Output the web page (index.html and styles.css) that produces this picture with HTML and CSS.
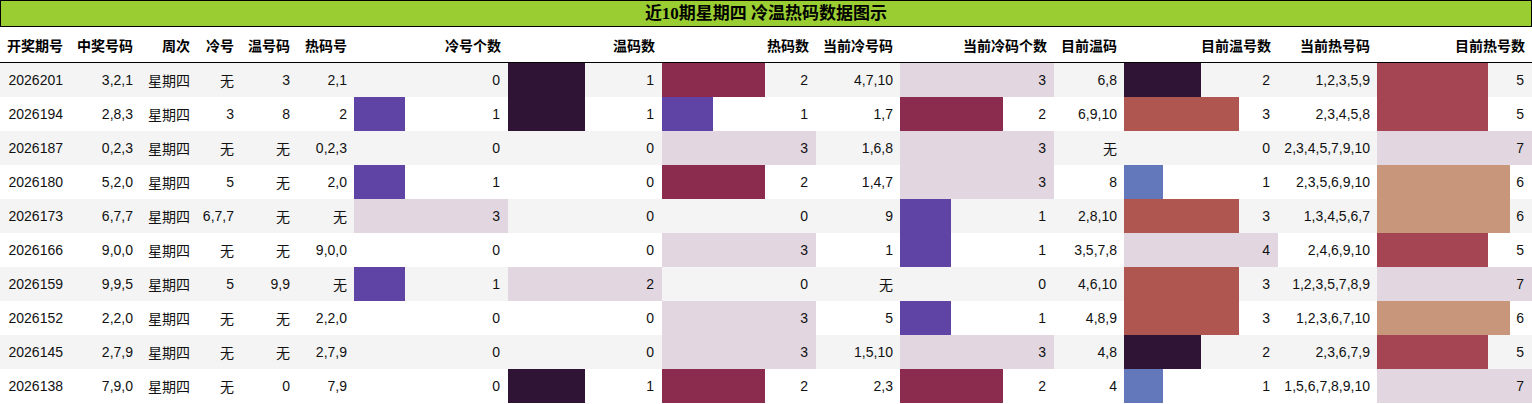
FILE: index.html
```html
<!DOCTYPE html>
<html lang="zh">
<head>
<meta charset="utf-8">
<title>近10期星期四 冷温热码数据图示</title>
<link rel="stylesheet" href="styles.css">
</head>
<body>
<div class="title">近10期星期四 冷温热码数据图示</div>
<table class="data">
  <colgroup>
    <col class="w70"><col class="w70"><col class="w57"><col class="w44"><col class="w56"><col class="w57">
    <col class="w154"><col class="w154"><col class="w154"><col class="w84"><col class="w154">
    <col class="w70"><col class="w154"><col class="w99"><col class="w155">
  </colgroup>
  <thead>
    <tr>
      <th>开奖期号</th><th>中奖号码</th><th>周次</th><th>冷号</th><th>温号码</th><th>热码号</th>
      <th>冷号个数</th><th>温码数</th><th>热码数</th><th>当前冷号码</th><th>当前冷码个数</th>
      <th>目前温码</th><th>目前温号数</th><th>当前热号码</th><th>目前热号数</th>
    </tr>
  </thead>
  <tbody>
    <tr>
      <td>2026201</td><td>3,2,1</td><td>星期四</td><td>无</td><td>3</td><td>2,1</td>
      <td class="bar">0</td>
      <td class="bar c-dark" style="--w:50%">1</td>
      <td class="bar c-maroon" style="--w:66.67%">2</td>
      <td>4,7,10</td>
      <td class="bar c-light" style="--w:100%">3</td>
      <td>6,8</td>
      <td class="bar c-dark" style="--w:50%">2</td>
      <td>1,2,3,5,9</td>
      <td class="bar c-rose" style="--w:71.43%">5</td>
    </tr>
    <tr>
      <td>2026194</td><td>2,8,3</td><td>星期四</td><td>3</td><td>8</td><td>2</td>
      <td class="bar c-purple" style="--w:33.33%">1</td>
      <td class="bar c-dark" style="--w:50%">1</td>
      <td class="bar c-purple" style="--w:33.33%">1</td>
      <td>1,7</td>
      <td class="bar c-maroon" style="--w:66.67%">2</td>
      <td>6,9,10</td>
      <td class="bar c-red" style="--w:75%">3</td>
      <td>2,3,4,5,8</td>
      <td class="bar c-rose" style="--w:71.43%">5</td>
    </tr>
    <tr>
      <td>2026187</td><td>0,2,3</td><td>星期四</td><td>无</td><td>无</td><td>0,2,3</td>
      <td class="bar">0</td>
      <td class="bar">0</td>
      <td class="bar c-light" style="--w:100%">3</td>
      <td>1,6,8</td>
      <td class="bar c-light" style="--w:100%">3</td>
      <td>无</td>
      <td class="bar">0</td>
      <td>2,3,4,5,7,9,10</td>
      <td class="bar c-light" style="--w:100%">7</td>
    </tr>
    <tr>
      <td>2026180</td><td>5,2,0</td><td>星期四</td><td>5</td><td>无</td><td>2,0</td>
      <td class="bar c-purple" style="--w:33.33%">1</td>
      <td class="bar">0</td>
      <td class="bar c-maroon" style="--w:66.67%">2</td>
      <td>1,4,7</td>
      <td class="bar c-light" style="--w:100%">3</td>
      <td>8</td>
      <td class="bar c-blue" style="--w:25%">1</td>
      <td>2,3,5,6,9,10</td>
      <td class="bar c-tan" style="--w:85.71%">6</td>
    </tr>
    <tr>
      <td>2026173</td><td>6,7,7</td><td>星期四</td><td>6,7,7</td><td>无</td><td>无</td>
      <td class="bar c-light" style="--w:100%">3</td>
      <td class="bar">0</td>
      <td class="bar">0</td>
      <td>9</td>
      <td class="bar c-purple" style="--w:33.33%">1</td>
      <td>2,8,10</td>
      <td class="bar c-red" style="--w:75%">3</td>
      <td>1,3,4,5,6,7</td>
      <td class="bar c-tan" style="--w:85.71%">6</td>
    </tr>
    <tr>
      <td>2026166</td><td>9,0,0</td><td>星期四</td><td>无</td><td>无</td><td>9,0,0</td>
      <td class="bar">0</td>
      <td class="bar">0</td>
      <td class="bar c-light" style="--w:100%">3</td>
      <td>1</td>
      <td class="bar c-purple" style="--w:33.33%">1</td>
      <td>3,5,7,8</td>
      <td class="bar c-light" style="--w:100%">4</td>
      <td>2,4,6,9,10</td>
      <td class="bar c-rose" style="--w:71.43%">5</td>
    </tr>
    <tr>
      <td>2026159</td><td>9,9,5</td><td>星期四</td><td>5</td><td>9,9</td><td>无</td>
      <td class="bar c-purple" style="--w:33.33%">1</td>
      <td class="bar c-light" style="--w:100%">2</td>
      <td class="bar">0</td>
      <td>无</td>
      <td class="bar">0</td>
      <td>4,6,10</td>
      <td class="bar c-red" style="--w:75%">3</td>
      <td>1,2,3,5,7,8,9</td>
      <td class="bar c-light" style="--w:100%">7</td>
    </tr>
    <tr>
      <td>2026152</td><td>2,2,0</td><td>星期四</td><td>无</td><td>无</td><td>2,2,0</td>
      <td class="bar">0</td>
      <td class="bar">0</td>
      <td class="bar c-light" style="--w:100%">3</td>
      <td>5</td>
      <td class="bar c-purple" style="--w:33.33%">1</td>
      <td>4,8,9</td>
      <td class="bar c-red" style="--w:75%">3</td>
      <td>1,2,3,6,7,10</td>
      <td class="bar c-tan" style="--w:85.71%">6</td>
    </tr>
    <tr>
      <td>2026145</td><td>2,7,9</td><td>星期四</td><td>无</td><td>无</td><td>2,7,9</td>
      <td class="bar">0</td>
      <td class="bar">0</td>
      <td class="bar c-light" style="--w:100%">3</td>
      <td>1,5,10</td>
      <td class="bar c-light" style="--w:100%">3</td>
      <td>4,8</td>
      <td class="bar c-dark" style="--w:50%">2</td>
      <td>2,3,6,7,9</td>
      <td class="bar c-rose" style="--w:71.43%">5</td>
    </tr>
    <tr>
      <td>2026138</td><td>7,9,0</td><td>星期四</td><td>无</td><td>0</td><td>7,9</td>
      <td class="bar">0</td>
      <td class="bar c-dark" style="--w:50%">1</td>
      <td class="bar c-maroon" style="--w:66.67%">2</td>
      <td>2,3</td>
      <td class="bar c-maroon" style="--w:66.67%">2</td>
      <td>4</td>
      <td class="bar c-blue" style="--w:25%">1</td>
      <td>1,5,6,7,8,9,10</td>
      <td class="bar c-light" style="--w:100%">7</td>
    </tr>
  </tbody>
</table>
</body>
</html>
```
FILE: styles.css
```css
html, body {
  margin: 0;
  padding: 0;
  background: #ffffff;
}

body {
  width: 1532px;
  font-family: "Liberation Sans", "Noto Sans CJK SC", sans-serif;
  font-size: 14px;
  color: #111111;
}

.title {
  box-sizing: border-box;
  height: 27px;
  line-height: 25px;
  border: 1px solid #000000;
  background: #9acd32;
  text-align: center;
  font-family: "Liberation Serif", "Noto Sans CJK SC", serif;
  font-weight: bold;
  font-size: 17px;
  color: #000000;
}

.data {
  width: 1532px;
  table-layout: fixed;
  border-collapse: separate;
  border-spacing: 0;
}

.w44 { width: 44px; }
.w56 { width: 56px; }
.w57 { width: 57px; }
.w70 { width: 70px; }
.w84 { width: 84px; }
.w99 { width: 99px; }
.w154 { width: 154px; }
.w155 { width: 155px; }

.data th {
  box-sizing: border-box;
  height: 36px;
  padding: 0 7px;
  text-align: right;
  font-weight: bold;
  color: #000000;
  border-bottom: 1px solid #000000;
  white-space: nowrap;
}

.data td {
  box-sizing: border-box;
  height: 34px;
  padding: 0 7px 0 0;
  text-align: right;
  white-space: nowrap;
  vertical-align: middle;
}

.data tbody tr:nth-child(odd) {
  background: #f4f4f4;
}

.data tbody tr:nth-child(even) {
  background: #ffffff;
}

.data td.bar {
  padding-right: 8px;
}

.data td.c-dark,
.data td.c-maroon,
.data td.c-purple,
.data td.c-light,
.data td.c-red,
.data td.c-tan,
.data td.c-blue,
.data td.c-rose {
  background: linear-gradient(90deg, var(--c) var(--w), transparent var(--w));
}

.data td.c-dark { --c: #301436; }
.data td.c-maroon { --c: #8b2b4e; }
.data td.c-purple { --c: #5f43a5; }
.data td.c-light { --c: #e2d7e1; }
.data td.c-red { --c: #b05650; }
.data td.c-tan { --c: #c8967a; }
.data td.c-blue { --c: #6378bb; }
.data td.c-rose { --c: #a54452; }
```
